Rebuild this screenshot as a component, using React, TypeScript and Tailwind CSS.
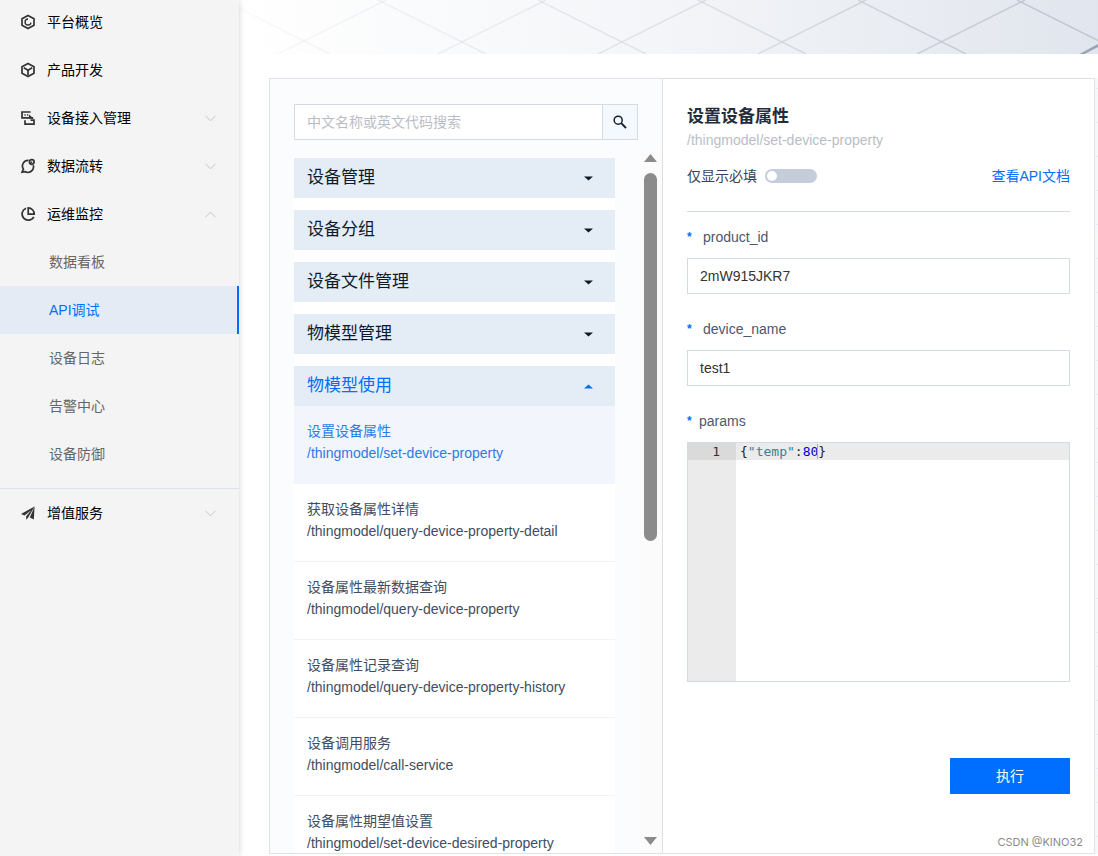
import { useState } from 'react';
import type { ReactNode } from 'react';

type MenuItem = {
  label: string;
  icon: ReactNode;
  arrow?: 'up' | 'down';
};

type Api = { name: string; path: string };

const iconProps = {
  width: 16,
  height: 16,
  viewBox: '0 0 16 16',
  fill: 'none',
  stroke: '#333333',
  strokeWidth: 1.7,
};

const menu: MenuItem[] = [
  {
    label: '平台概览',
    icon: (
      <svg {...iconProps}>
        <path d="M8 1.5 14 4.8v6.4L8 14.5 2 11.2V4.8z" />
        <path d="M8 5a3 3 0 1 0 3 3.6" strokeWidth="1.4" />
      </svg>
    ),
  },
  {
    label: '产品开发',
    icon: (
      <svg {...iconProps}>
        <path d="M8 1.5 14 4.8v6.4L8 14.5 2 11.2V4.8z" />
        <path d="M3.8 5.8 8 8.2l4.2-2.4M8 8.2V13" />
      </svg>
    ),
  },
  {
    label: '设备接入管理',
    arrow: 'down',
    icon: (
      <svg {...iconProps}>
        <path d="M10.6 2H2v5.8h11.2" />
        <path d="M9 4.4l4.6 4.2H9z" fill="#333333" stroke="none" />
        <path d="M4.4 5h1.3M7 5h1.3" strokeWidth="1.4" />
        <path d="M5 10.2v3.9h9v-3.9h-3.4" />
      </svg>
    ),
  },
  {
    label: '数据流转',
    arrow: 'down',
    icon: (
      <svg {...iconProps}>
        <path d="M8.6 2.4a5.7 5.7 0 0 0-5.2 8.8l-1.3 2.9 2.8-.5a5.7 5.7 0 0 0 8.4-6.4" />
        <circle cx="11.8" cy="4" r="2.3" />
        <path d="M10 5.8l2.2-2.2" strokeWidth="1.3" />
      </svg>
    ),
  },
  {
    label: '运维监控',
    arrow: 'up',
    icon: (
      <svg {...iconProps}>
        <path d="M6 2.2a6.2 6.2 0 1 0 7.8 8.6" />
        <path d="M8.2 1.8v6.4h6A6.2 6.2 0 0 0 8.2 1.8z" />
      </svg>
    ),
  },
];

const subMenu = ['数据看板', 'API调试', '设备日志', '告警中心', '设备防御'];

const groups = ['设备管理', '设备分组', '设备文件管理', '物模型管理', '物模型使用'];

const apis: Api[] = [
  { name: '设置设备属性', path: '/thingmodel/set-device-property' },
  { name: '获取设备属性详情', path: '/thingmodel/query-device-property-detail' },
  { name: '设备属性最新数据查询', path: '/thingmodel/query-device-property' },
  { name: '设备属性记录查询', path: '/thingmodel/query-device-property-history' },
  { name: '设备调用服务', path: '/thingmodel/call-service' },
  { name: '设备属性期望值设置', path: '/thingmodel/set-device-desired-property' },
];

function MenuRow({ label, icon, arrow }: MenuItem) {
  return (
    <a href="#" className="flex h-12 items-center pl-5 pr-[23px] text-sm text-black">
      {icon}
      <span className="ml-[11px] flex-1">{label}</span>
      {arrow && (
        <svg width="11" height="7" viewBox="0 0 11 7" fill="none" stroke="#c4c4c4">
          <path d={arrow === 'down' ? 'M.5.8l5 5 5-5' : 'M.5 6.2l5-5 5 5'} />
        </svg>
      )}
    </a>
  );
}

function Sidebar() {
  return (
    <aside className="z-10 w-[239px] shrink-0 bg-[#f4f4f4] shadow-[0_0_6px_rgba(0,0,0,0.18)]">
      <nav className="-mt-[2px]">
        {menu.map((item) => (
          <MenuRow key={item.label} {...item} />
        ))}
        <div className="mb-[10px]">
          {subMenu.map((label) => (
            <a
              key={label}
              href="#"
              className={
                label === 'API调试'
                  ? 'flex h-12 items-center border-r-2 border-[#006eff] bg-[#e4ebf5] pl-[49px] text-sm text-[#006eff]'
                  : 'flex h-12 items-center pl-[49px] text-sm text-[#666666]'
              }
            >
              {label}
            </a>
          ))}
        </div>
        <div className="border-t border-[#dbe1ee]">
          <MenuRow
            label="增值服务"
            arrow="down"
            icon={
              <svg width="16" height="16" viewBox="0 0 16 16" fill="#333333">
                <path d="M14.6 1.4 1 9l3.6 1.6L11.4 5 6.2 11.2v3.6l2-2.2z" />
                <path d="M14.6 1.4 13.8 14.6l-4-2.2z" />
              </svg>
            }
          />
        </div>
      </nav>
    </aside>
  );
}

function Banner() {
  return (
    <div className="h-[54px] shrink-0 overflow-hidden bg-linear-to-r from-white via-[#f3f5f8] to-[#e1e5ed]">
      <svg width="859" height="54" viewBox="0 0 859 54" fill="none">
        <defs>
          <linearGradient id="grid" gradientUnits="userSpaceOnUse" x1="0" y1="0" x2="859" y2="0">
            <stop offset="0" stopColor="#c8cdd6" stopOpacity="0.1" />
            <stop offset="0.5" stopColor="#c8cdd6" stopOpacity="0.5" />
            <stop offset="1" stopColor="#bcc3cf" />
          </linearGradient>
        </defs>
        <g stroke="url(#grid)" strokeWidth="1.4">
          <path d="M-13 2 91 54M139 0 247 54M299 0 407 54M459 0 567 54M619 0 727 54M778 0 886 54" />
          <path d="M147 0 39 54M307 0 199 54M467 0 359 54M627 0 519 54M786 0 678 54" />
        </g>
        <path d="M841 55 860 45" stroke="#98a5b8" strokeWidth="2.5" />
      </svg>
    </div>
  );
}

function ApiList() {
  return (
    <section className="flex w-[393px] shrink-0 flex-col border-r border-[#dcdfe3] bg-[#fbfcfe] pt-[25px]">
      <form className="mx-6 flex h-9 border border-[#d5dbe2] bg-white">
        <input
          aria-label="搜索"
          placeholder="中文名称或英文代码搜索"
          className="min-w-0 flex-1 px-3 text-sm outline-none placeholder:text-[#b9bec6]"
        />
        <button
          type="button"
          aria-label="搜索"
          className="flex w-[35px] items-center justify-center border-l border-[#d5dbe2] bg-[#f3f9ff]"
        >
          <svg width="14" height="14" viewBox="0 0 14 14" fill="none" stroke="#16202e" strokeWidth="1.5">
            <circle cx="5.2" cy="5.2" r="4" />
            <path d="M8.2 8.2l4.8 4.8" strokeWidth="1.9" />
          </svg>
        </button>
      </form>

      <div className="mt-3 flex min-h-0 flex-1 justify-between">
        <div className="ml-6 w-[321px] overflow-hidden pt-[6px]">
          <div className="flex flex-col gap-3 bg-white">
            {groups.map((group) => {
              const open = group === '物模型使用';
              return (
                <button
                  key={group}
                  type="button"
                  aria-expanded={open}
                  className={
                    open
                      ? 'flex h-10 shrink-0 items-center justify-between bg-[#e4ecf6] pl-[13px] pr-[22px] text-[17px] text-[#006eff]'
                      : 'flex h-10 shrink-0 items-center justify-between bg-[#e4ecf6] pl-[13px] pr-[22px] text-[17px] text-[#0e1a2b]'
                  }
                >
                  {group}
                  <svg width="9" height="5" viewBox="0 0 9 5" fill="currentColor">
                    <path d={open ? 'M0 4.5h9L4.5.5z' : 'M0 .5h9l-4.5 4z'} />
                  </svg>
                </button>
              );
            })}
          </div>
          <ul>
            {apis.map((api, i) => (
              <li key={api.path}>
                <a
                  href="#"
                  className={
                    i === 0
                      ? 'block h-[78px] bg-[#f2f5fb] pl-[13px] pt-[14px] text-sm leading-[22px] text-[#2b7be9]'
                      : 'block h-[78px] border-b border-[#f1f3f7] bg-white pl-[13px] pt-[14px] text-sm leading-[22px] text-[#414d61]'
                  }
                >
                  <span className="block">{api.name}</span>
                  <span className="block">{api.path}</span>
                </a>
              </li>
            ))}
          </ul>
        </div>
        <div className="flex w-[23px] flex-col items-center bg-[#fbfbfb] pb-2 pt-[2px]">
          <svg width="13" height="8" viewBox="0 0 13 8" fill="#8b8b8b">
            <path d="M0 8 6.5 0 13 8z" />
          </svg>
          <div className="mt-[11px] flex-1">
            <div className="h-[368px] w-[13px] rounded-full bg-[#8b8b8b]" />
          </div>
          <svg width="13" height="8" viewBox="0 0 13 8" fill="#8b8b8b">
            <path d="M0 0h13L6.5 8z" />
          </svg>
        </div>
      </div>
    </section>
  );
}

function Field({ name, value }: { name: string; value: string }) {
  const [text, setText] = useState(value);
  return (
    <div className="mb-[17px]">
      <label htmlFor={name} className="flex h-9 items-center text-sm text-[#4b586e]">
        <span className="w-4 text-xs font-bold text-[#006eff]">*</span>
        {name}
      </label>
      <input
        id={name}
        value={text}
        onChange={(e) => setText(e.target.value)}
        className="mt-[3px] block h-9 w-full border border-[#d5dbe5] px-3 text-sm leading-5 text-[#333333] outline-none"
      />
    </div>
  );
}

function ParamsEditor() {
  return (
    <div>
      <label htmlFor="params" className="flex h-9 items-center text-sm text-[#4b586e]">
        <span className="w-3 text-xs font-bold text-[#006eff]">*</span>
        params
      </label>
      <div className="mt-[3px] flex h-60 border border-[#d5dbe5] font-['DejaVu_Sans_Mono',monospace] text-[13px] leading-[17px]">
        <div className="w-12 bg-[#ebebeb] text-[#333333]">
          <div className="bg-[#dadada] pr-4 text-right">1</div>
        </div>
        <div className="relative flex-1">
          <pre className="bg-[#ebebeb] pl-1 font-['DejaVu_Sans_Mono',monospace] text-[#222222]">
            {'{'}
            <span className="text-[#318495]">"temp"</span>:<span className="text-[#0000cd]">80</span>
            <span className="shadow-[-1px_0_0_#aaaaaa]">{'}'}</span>
          </pre>
          <textarea
            id="params"
            spellCheck={false}
            className="absolute inset-0 resize-none bg-transparent pl-1 text-transparent outline-none"
          />
        </div>
      </div>
    </div>
  );
}

function ApiForm() {
  return (
    <section className="flex min-w-0 flex-1 flex-col bg-white px-6 pt-[25px]">
      <h2 className="text-[17px] font-bold leading-[26px] text-[#1f2d3d]">设置设备属性</h2>
      <p className="text-sm leading-5 text-[#b9bec6]">/thingmodel/set-device-property</p>

      <div className="mt-[15px] flex h-[22px] items-center justify-between text-sm">
        <label className="flex items-center gap-2 text-[#36435a]">
          仅显示必填
          <input
            type="checkbox"
            role="switch"
            className="flex h-[14px] w-[52px] appearance-none items-center rounded-full bg-[#c5ccda] px-[2px] before:size-[10px] before:rounded-full before:bg-white"
          />
        </label>
        <a href="#" className="text-[#006eff]">
          查看API文档
        </a>
      </div>

      <hr className="mb-[7px] mt-6 border-[#d5dbe5]" />

      <Field name="product_id" value="2mW915JKR7" />
      <Field name="device_name" value="test1" />
      <ParamsEditor />

      <button type="button" className="mt-[76px] h-9 w-[120px] self-end bg-[#006eff] text-sm text-white">
        执行
      </button>
    </section>
  );
}

export default function App() {
  return (
    <div className="relative flex h-screen overflow-hidden bg-white font-['Liberation_Sans','Noto_Sans_CJK_SC',sans-serif]">
      <Sidebar />
      <main className="flex min-w-0 flex-1 flex-col">
        <Banner />
        <div className="mb-[2px] ml-[30px] mt-6 flex min-h-0 flex-1">
          <div className="flex min-w-0 flex-1 border border-[#dfe2e6]">
            <ApiList />
            <ApiForm />
          </div>
          <div className="w-[3px] shrink-0 bg-[repeating-linear-gradient(#f7f8fa_0,#f7f8fa_10px,#e9ecf4_10px,#e9ecf4_11px,#f7f8fa_11px,#f7f8fa_34px)]" />
        </div>
      </main>
      <span className="absolute bottom-1 right-[15px] font-['Inter',sans-serif] text-[11px] leading-5 text-[#8c8c8c]">
        CSDN @KINO32
      </span>
    </div>
  );
}
